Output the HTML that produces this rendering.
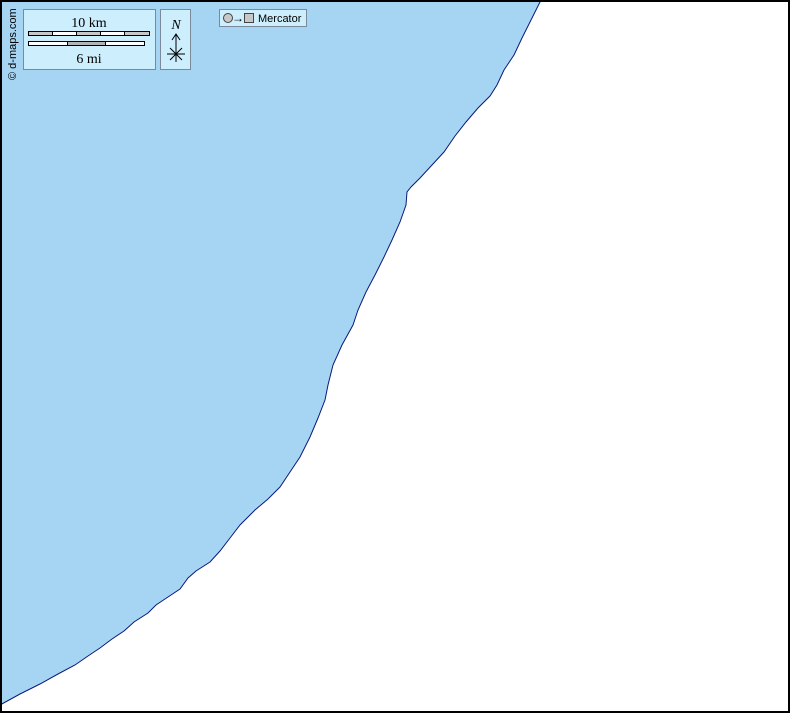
<!DOCTYPE html>
<html><head><meta charset="utf-8"><style>
body{margin:0;width:790px;height:713px;overflow:hidden;background:#fff}
.t{font-family:"Liberation Serif",serif;font-size:14px;fill:#000}
</style></head><body>
<svg width="790" height="713" viewBox="0 0 790 713" xmlns="http://www.w3.org/2000/svg">
<rect x="0" y="0" width="790" height="713" fill="#fff"/>
<path d="M0,0 L541,0 L532,18 L522,38 L514,55 L504,70 L497,85 L490,96 L478,108 L466,122 L455,136 L444,152 L432,165 L420,178 L411,187 L407,192 L406,205 L400,222 L392,240 L384,257 L375,275 L366,292 L358,310 L353,325 L342,345 L333,365 L328,385 L325,400 L318,418 L310,437 L300,457 L290,472 L280,487 L268,499 L255,510 L240,525 L230,538 L220,551 L210,562 L196,571 L188,578 L180,589 L168,597 L156,605 L148,613 L134,622 L124,631 L112,639 L100,648 L88,656 L75,665 L58,674 L40,684 L20,694 L0,705 Z" fill="#a6d5f4" stroke="#0a1a7a" stroke-width="1"/>
<rect x="1" y="1" width="788" height="711" fill="none" stroke="#000" stroke-width="2"/>
<text transform="translate(16,80) rotate(-90)" font-family="Liberation Sans,sans-serif" font-size="11" fill="#000">© d-maps.com</text>
<rect x="23.5" y="9.5" width="132" height="60" fill="#cdeefd" stroke="#7a8a98"/>
<text x="89" y="27" text-anchor="middle" class="t">10 km</text>
<rect x="28.5" y="31.5" width="121" height="4" fill="#fff" stroke="#000"/>
<rect x="28.5" y="31.5" width="24" height="4" fill="#c8c8c8" stroke="#000"/>
<rect x="76.5" y="31.5" width="24" height="4" fill="#c8c8c8" stroke="#000"/>
<rect x="124.5" y="31.5" width="25" height="4" fill="#c8c8c8" stroke="#000"/>
<rect x="28.5" y="41.5" width="116" height="4" fill="#fff" stroke="#000"/>
<rect x="67.5" y="41.5" width="38" height="4" fill="#b4b4b4" stroke="#000"/>
<text x="89" y="63" text-anchor="middle" class="t">6 mi</text>
<rect x="160.5" y="9.5" width="30" height="60" fill="#cdeefd" stroke="#7a8a98"/>
<text x="176" y="29" text-anchor="middle" class="t" font-style="italic">N</text>
<path d="M176,62 V35 M172,40 L176,34 L180,40 M167,54 H185 M170,48 L182,60 M182,48 L170,60" stroke="#000" fill="none" stroke-width="1"/>
<rect x="219.5" y="9.5" width="87" height="17" fill="#cdeefd" stroke="#7a8a98"/>
<circle cx="228" cy="18" r="4.5" fill="#c8c8c8" stroke="#444"/>
<text x="232" y="22" font-family="Liberation Sans,sans-serif" font-size="12">→</text>
<rect x="244.5" y="13.5" width="9" height="9" fill="#c8c8c8" stroke="#444"/>
<text x="258" y="22" font-family="Liberation Sans,sans-serif" font-size="11">Mercator</text>
</svg>
</body></html>
